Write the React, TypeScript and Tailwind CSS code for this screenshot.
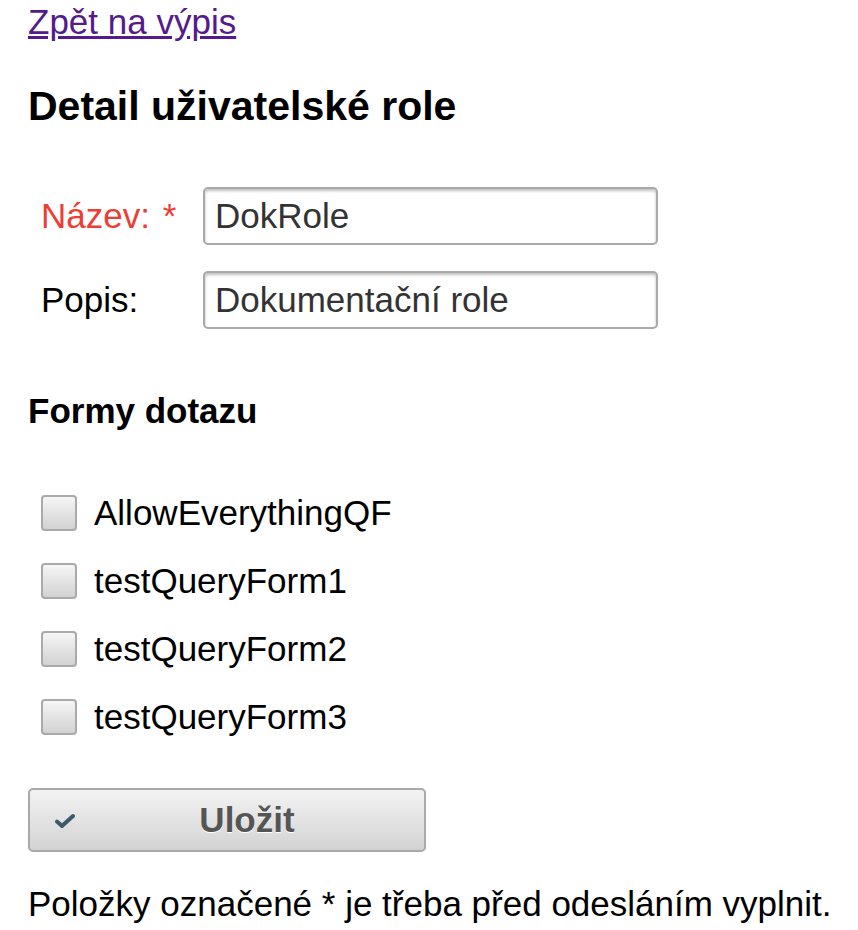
export default function App() {
  const forms = ["AllowEverythingQF", "testQueryForm1", "testQueryForm2", "testQueryForm3"];

  return (
    <div className="min-h-[930px] bg-white pl-[28px] font-['Liberation_Sans',Arial,sans-serif] text-[35px] text-black">
      <a href="#" className="block h-[44px] w-fit leading-[44px] text-[#551a8b] underline">
        Zpět na výpis
      </a>

      <h3 className="mt-[38px] text-[41px] leading-[48px] font-bold">Detail uživatelské role</h3>

      {/* Form fields */}
      <div className="mt-[57px] flex flex-col gap-[26px]">
        <div className="flex items-center">
          <label className="w-[175px] pl-[13px] text-[#ee3d33]">
            Název: <span className="ml-[3px]">*</span>
          </label>
          <div className="flex h-[58px] w-[455px] items-center rounded-[5px] border-2 border-[#a9a9a9] bg-white pl-[10px] text-[#333] shadow-[inset_0_2px_3px_rgba(0,0,0,0.25)]">
            DokRole
          </div>
        </div>
        <div className="flex items-center">
          <label className="w-[175px] pl-[13px]">Popis:</label>
          <div className="flex h-[58px] w-[455px] items-center rounded-[5px] border-2 border-[#a9a9a9] bg-white pl-[10px] text-[#333] shadow-[inset_0_2px_3px_rgba(0,0,0,0.25)]">
            Dokumentační role
          </div>
        </div>
      </div>

      <h4 className="mt-[58px] text-[35px] leading-[48px] font-bold">Formy dotazu</h4>

      {/* Checkboxes */}
      <div className="mt-[44px] flex flex-col">
        {forms.map((f) => (
          <div key={f} className="flex h-[68px] items-center pl-[13px]">
            <span className="h-[36px] w-[36px] rounded-[4px] border-2 border-[#aaa] bg-gradient-to-b from-[#f6f6f6] to-[#d2d2d2]" />
            <span className="ml-[17px]">{f}</span>
          </div>
        ))}
      </div>

      {/* Save button */}
      <button className="relative mt-[37px] flex h-[64px] w-[398px] items-center justify-center rounded-[5px] border-2 border-[#a9a9a9] bg-gradient-to-b from-[#f3f3f3] to-[#d3d3d3] pl-[40px] font-bold text-[#555] [text-shadow:0_1px_0_#fff]">
        <svg className="absolute left-[25px] top-[23px]" width="20" height="16" viewBox="0 0 20 16">
          <path d="M2 8.5 L7 13 L18 3" fill="none" stroke="#3b5a6c" strokeWidth="4" strokeLinecap="round" strokeLinejoin="round" />
        </svg>
        Uložit
      </button>

      <p className="mt-[28px] leading-[48px]">Položky označené * je třeba před odesláním vyplnit.</p>
    </div>
  );
}
